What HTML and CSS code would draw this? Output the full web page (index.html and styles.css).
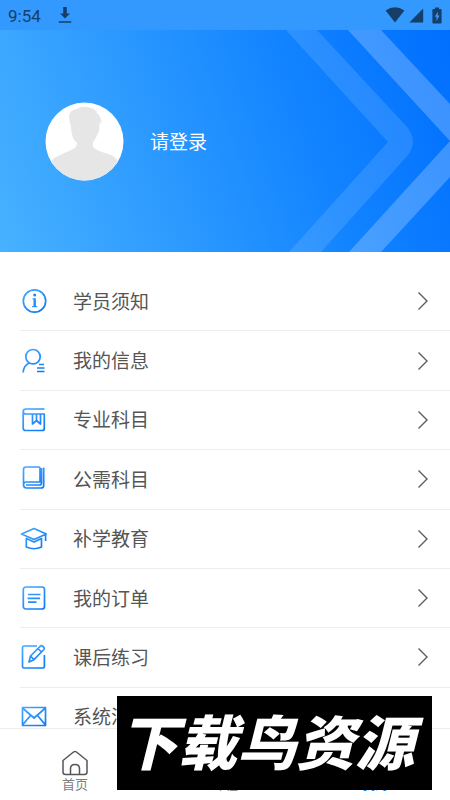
FILE: index.html
```html
<!DOCTYPE html>
<html lang="zh-CN">
<head>
<meta charset="utf-8">
<meta name="viewport" content="width=device-width, initial-scale=1">
<title>我的</title>
<link rel="stylesheet" href="styles.css">
</head>
<body>
<svg class="defs" aria-hidden="true">
  <defs>
    <linearGradient id="blue" gradientUnits="userSpaceOnUse" x1="4" y1="2" x2="22" y2="26">
      <stop offset="0" stop-color="#4aa9ff"/>
      <stop offset="1" stop-color="#0b78f5"/>
    </linearGradient>
  </defs>
</svg>

<div class="status">
  <span class="clock">9:54</span>
  <svg class="download" width="14" height="18" viewBox="0 0 14 18"><path d="M5.200 1h3.600v6.500H12L7 12.500 2 7.500h3.200zM.8 15.200h12.400v1.500H.8z"/></svg>
  <div class="signals">
    <svg width="20" height="16" viewBox="0 0 20 16"><path d="M.6 3.600Q10-3.300 19.400 3.600L10 15.400z"/></svg>
    <svg width="15" height="16" viewBox="0 0 15 16"><path d="M14.200 1.500v13.900H.4z"/></svg>
    <svg width="10" height="17" viewBox="0 0 10 17"><path fill-rule="evenodd" d="M3 .4h4v1.600h1.600q1 0 1 1v12.600q0 1-1 1H1.400q-1 0-1-1V3q0-1 1-1H3zM6 4.500 2.700 9.700h1.800v4.300l3-5.500H5.700z"/></svg>
  </div>
</div>

<header class="profile">
  <svg class="chevrons" viewBox="0 0 170 222" preserveAspectRatio="xMaxYMid slice" aria-hidden="true">
    <path class="band-soft" d="M6 0 108 112 9 222h32l87-97q10-13 0-27L37 0z"/>
    <path class="band-bright" d="M68 0 170 111 69 222h32l69-75V74L101 0z"/>
  </svg>
  <svg class="avatar" width="79" height="79" viewBox="0 0 79 79" role="img" aria-label="头像">
    <clipPath id="round"><circle cx="39.500" cy="39.500" r="39"/></clipPath>
    <circle cx="39.500" cy="39.500" r="39" fill="#fff"/>
    <path clip-path="url(#round)" fill="#e6e6e6" d="M26 25Q24 18 24 13Q26 7 32 7Q36 4 42 5Q49 6 52 10L51 10Q56 14 57 21L55 18L56 23L54 21Q55 29 53 31Q51 37 48 40V45Q51 48 57 50L66 53Q71 55 73 60V79H6V60Q7 57 11 55L26 48Q32 46 32 41Q28 38 27 32Q26 29 26 25Z"/>
  </svg>
  <a class="login" href="#login">请登录</a>
</header>

<main>
  <ul class="menu">
    <li><a href="#notice">
      <svg class="icon" viewBox="0 0 28 28"><circle cx="14.500" cy="14" r="11.200"/><path d="M12.500 11.800h2M12 19.700h5.400" stroke-width="1"/><path d="M14.700 11.300v8.700" stroke-width="2.400"/><circle class="solid" cx="14.700" cy="8" r="1.500"/></svg>
      <span class="label">学员须知</span>
      <svg class="arrow" viewBox="0 0 12 20"><path d="m1.500 1.500 8.500 8.500-8.500 8.500"/></svg>
    </a></li>
    <li><a href="#info">
      <svg class="icon" viewBox="0 0 28 28"><circle cx="13" cy="9.700" r="7.200"/><path d="M9.200 16Q3.500 18.500 3.200 25.500M19 17.500h5M17 21h7.500M17 24.500h7.500"/></svg>
      <span class="label">我的信息</span>
      <svg class="arrow" viewBox="0 0 12 20"><path d="m1.500 1.500 8.500 8.500-8.500 8.500"/></svg>
    </a></li>
    <li><a href="#major">
      <svg class="icon" viewBox="0 0 28 28"><path d="M24.500 3H6Q3.200 3 3.200 5.500V22q0 2.500 2.500 2.500h16.600q2 0 2-2V8H6Q3.200 8 3.200 5.500M12.500 8v10l4-3.500 4 3.500V8M16.500 8v6"/></svg>
      <span class="label">专业科目</span>
      <svg class="arrow" viewBox="0 0 12 20"><path d="m1.500 1.500 8.500 8.500-8.500 8.500"/></svg>
    </a></li>
    <li><a href="#public">
      <svg class="icon" viewBox="0 0 28 28"><path d="M6 2h12.500q1.500 0 1.500 1.500V17H6.500Q3.500 17 3.500 20V4.500Q3.500 2 6 2zM3.500 19.500q0 3.500 3 3.500H21q2.700 0 2.700-2.500V2.500M6 20h13.500q2 0 2-2V3"/></svg>
      <span class="label">公需科目</span>
      <svg class="arrow" viewBox="0 0 12 20"><path d="m1.500 1.500 8.500 8.500-8.500 8.500"/></svg>
    </a></li>
    <li><a href="#makeup">
      <svg class="icon" viewBox="0 0 28 28"><path d="M1.500 9 14 3.500l12.300 5.500L14 14.500zM25.600 9.500v6.500M6.300 13.500v8.500q7.700 3.500 15.200 0v-8.500L14 17z"/></svg>
      <span class="label">补学教育</span>
      <svg class="arrow" viewBox="0 0 12 20"><path d="m1.500 1.500 8.500 8.500-8.500 8.500"/></svg>
    </a></li>
    <li><a href="#orders">
      <svg class="icon" viewBox="0 0 28 28"><rect x="3.300" y="3" width="21.200" height="22" rx="2.500"/><path d="M8 10.500h12.500M7.500 14.300h12.500M8 18.200h8.500"/></svg>
      <span class="label">我的订单</span>
      <svg class="arrow" viewBox="0 0 12 20"><path d="m1.500 1.500 8.500 8.500-8.500 8.500"/></svg>
    </a></li>
    <li><a href="#practice">
      <svg class="icon" viewBox="0 0 28 28"><path d="M17 3H4q-1.500 0-1.500 1.500V23.500Q2.500 25 4 25h19q1.400 0 1.400-1.500V12M9 19l1.500-6L20.500 3q1.200-.8 2.400.3l1 1q.9 1.200 0 2.200L14 16.700zM18 5.500l3.500 3.500M10.500 13l3.500 3.700"/></svg>
      <span class="label">课后练习</span>
      <svg class="arrow" viewBox="0 0 12 20"><path d="m1.500 1.500 8.500 8.500-8.500 8.500"/></svg>
    </a></li>
    <li><a href="#messages">
      <svg class="icon" viewBox="0 0 28 28"><path d="M2.500 4.500h23v18h-23zM2.500 5l11.500 10 11.500-10M2.500 22l8-9.500M25.500 22l-8-9.500"/></svg>
      <span class="label">系统消息</span>
      <svg class="arrow" viewBox="0 0 12 20"><path d="m1.500 1.500 8.500 8.500-8.500 8.500"/></svg>
    </a></li>
  </ul>
</main>

<nav class="tabs">
  <a href="#home">
    <svg viewBox="0 0 28 28"><path d="M2 11.500 12.500 3q1.500-1 3 0L26 11.500V23q0 2.500-2.500 2.500h-19Q2 25.500 2 23zM9.500 25v-5.500q0-4 4.500-4t4.500 4V25"/></svg>
    首页
  </a>
  <a href="#course">
    <svg viewBox="0 0 28 28"><path d="M4 4h20v20H4zM9 10h10M9 15h10"/></svg>
    课程
  </a>
  <a class="current" href="#me">
    <svg viewBox="0 0 28 28"><circle cx="14" cy="9" r="6"/><path d="M3 25q0-9 11-9t11 9z"/></svg>
    我的
  </a>
</nav>

<div class="banner">下载鸟资源</div>
</body>
</html>
```
FILE: styles.css
```css
* { box-sizing: border-box; }

body {
  margin: 0;
  min-height: 100vh;
  overflow: hidden;
  background: #fff;
  color: #555;
  font-family: Roboto, "Noto Sans CJK SC", sans-serif;
}

a { color: inherit; text-decoration: none; }
svg { display: block; flex: none; }
.defs { position: absolute; width: 0; height: 0; }

.status {
  display: flex;
  align-items: center;
  height: 30px;
  padding: 0 8px;
  background: #3399ff;
  color: #153f69;
  fill: #153f69;
}
.clock { font-size: 17px; line-height: 30px; padding-top: 2px; }
.download { margin-left: 17px; }
.signals { display: flex; align-items: center; gap: 4px; margin-left: auto; }
.signals svg:last-child { margin-left: 4px; }

.profile {
  position: relative;
  display: flex;
  align-items: center;
  gap: 26px;
  height: 222px;
  padding: 0 45px;
  background: linear-gradient(70deg, #47b2ff 0%, #2c99ff 36%, #1183ff 68%, #006fff 100%);
}
.chevrons {
  position: absolute;
  top: 0;
  right: 0;
  height: 100%;
}
.band-soft { fill: #fff; fill-opacity: .12; }
.band-bright { fill: #fff; fill-opacity: .23; }
.avatar, .login { position: relative; }
.login { padding-top: 3px; color: #fff; font-size: 19px; line-height: 28px; }

.menu {
  display: grid;
  grid-auto-rows: 1fr;
  min-height: 475px;
  margin: 20px 0 0;
  padding: 0;
  list-style: none;
}
.menu li {
  margin-left: 20px;
  border-bottom: 1px solid #ededed;
}
.menu a {
  display: flex;
  align-items: center;
  height: 100%;
  padding-right: 21px;
}
.icon {
  width: 28px;
  height: 28px;
  fill: none;
  stroke: url(#blue);
  stroke-width: 1.700;
  stroke-linejoin: round;
}
.icon .solid { fill: #2186f7; stroke: none; }
.label { flex: 1; margin-left: 25px; padding-top: 3px; font-size: 19px; line-height: 28px; }
.arrow {
  width: 12px;
  height: 20px;
  fill: none;
  stroke: #5c5c5c;
  stroke-width: 1.400;
}

.tabs {
  position: fixed;
  left: 0;
  right: 0;
  bottom: 0;
  display: grid;
  grid-template-columns: repeat(3, 1fr);
  height: 72px;
  border-top: 1px solid #ededed;
  background: #fff;
  color: #808080;
  font-size: 13px;
  line-height: 15px;
}
.tabs a {
  display: flex;
  flex-direction: column;
  align-items: center;
  padding-top: 20px;
}
.tabs svg {
  width: 28px;
  height: 28px;
  fill: none;
  stroke: #555;
  stroke-width: 1.500;
}
.tabs .current { color: #1680fa; }
.tabs .current svg { stroke: #1680fa; }

.banner {
  position: fixed;
  right: 18px;
  bottom: 10px;
  width: 70%;
  height: 94px;
  padding-right: 16px;
  background: #000;
  color: #fff;
  font: italic 900 59px/88px "Noto Sans CJK SC", sans-serif;
  text-align: center;
  white-space: nowrap;
}
```
